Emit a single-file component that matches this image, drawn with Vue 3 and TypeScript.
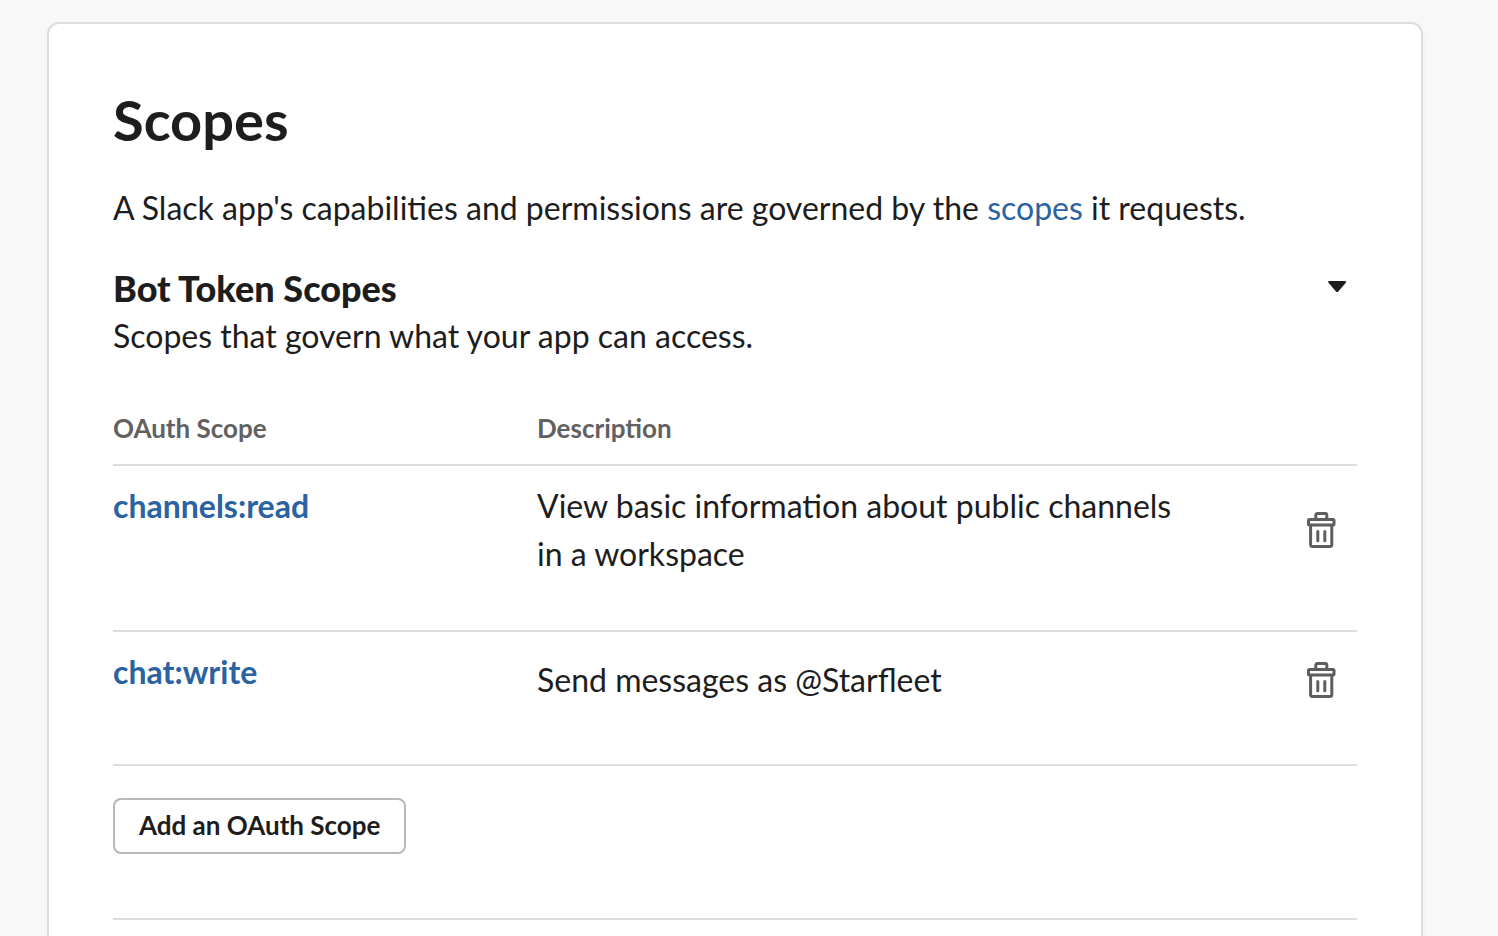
<script setup lang="ts">
interface Scope {
  name: string
  description: string
}

const scopes: Scope[] = [
  { name: 'channels:read', description: 'View basic information about public channels in a workspace' },
  { name: 'chat:write', description: 'Send messages as @Starfleet' },
]
</script>

<template>
  <main class="page">
    <section class="card">
      <h1>Scopes</h1>
      <p class="intro">
        A Slack app's capabilities and permissions are governed by the <a href="#scopes">scopes</a> it requests.
      </p>
      <header class="group">
        <div>
          <h2>Bot Token Scopes</h2>
          <p>Scopes that govern what your app can access.</p>
        </div>
        <button class="toggle" type="button" aria-label="Collapse Bot Token Scopes">
          <svg width="20" height="14" viewBox="0 0 20 14" aria-hidden="true">
            <path d="M2.2 1h15.9c1 0 1.300 1 .7 1.700l-7.500 8.700c-.7.8-1.600.8-2.300 0L1.500 2.700C.9 2 1.200 1 2.200 1z" fill="#1d1d1d" />
          </svg>
        </button>
      </header>
      <table>
        <thead>
          <tr>
            <th class="scope" scope="col">OAuth Scope</th>
            <th scope="col">Description</th>
            <th class="action"></th>
          </tr>
        </thead>
        <tbody>
          <tr v-for="scope in scopes" :key="scope.name">
            <td class="name"><a :href="'#' + scope.name">{{ scope.name }}</a></td>
            <td class="description">{{ scope.description }}</td>
            <td class="action">
              <button class="delete" type="button" :aria-label="'Delete ' + scope.name">
                <svg width="30" height="38" viewBox="0 0 30 38" fill="none" stroke="#5e5e5e" stroke-width="3" stroke-linecap="round" stroke-linejoin="round" aria-hidden="true">
                  <rect x="1.500" y="8.500" width="25.500" height="5.500" rx="1" />
                  <path d="M8.800 8V4c0-.8.700-1.500 1.500-1.500h8c.8 0 1.500.7 1.500 1.500v4M3.600 14.500v19c0 1.200.8 2 2 2h17.200c1.200 0 2-.8 2-2v-19M10.800 20.500v9.300M17.800 20.500v9.300" />
                </svg>
              </button>
            </td>
          </tr>
        </tbody>
      </table>
      <button class="add" type="button">Add an OAuth Scope</button>
      <hr />
    </section>
  </main>
</template>

<style>
body {
  margin: 0;
  background: #f8f8f8;
}
</style>

<style scoped>
.page {
  box-sizing: border-box;
  height: 100vh;
  overflow: hidden;
  padding: 22px 75px 0 47px;
  color: #1d1d1d;
  font: 32px/48px Lato, "Liberation Sans", sans-serif;
}
.card {
  box-sizing: border-box;
  min-height: 110vh;
  padding: 60px 64px;
  border: 2px solid #ddd;
  border-radius: 12px;
  background: #fff;
  box-shadow: 0 2px 6px rgba(0, 0, 0, 0.04);
}
h1, h2, p {
  margin: 0;
}
h1 {
  font-size: 56px;
  line-height: 72px;
  font-weight: 700;
}
.intro {
  margin-top: 28px;
}
a {
  color: #2b62a1;
  text-decoration: none;
}
.group {
  display: flex;
  justify-content: space-between;
  align-items: flex-start;
  margin-top: 32px;
}
h2 {
  font-family: "Lato Heavy", Lato, "Liberation Sans", sans-serif;
  font-size: 36px;
  line-height: 48px;
  font-weight: 800;
}
button {
  font-family: inherit;
  color: inherit;
  cursor: pointer;
}
.toggle, .delete {
  padding: 0;
  border: 0;
  background: none;
}
.toggle {
  margin: 16px 10px 0 0;
}
svg {
  display: block;
}
table {
  width: 100%;
  margin-top: 32px;
  border-collapse: separate;
  border-spacing: 0;
  table-layout: fixed;
}
th, td {
  border-bottom: 2px solid #ddd;
  text-align: left;
}
th {
  padding: 16px 0;
  color: #616161;
  font-size: 26px;
  line-height: 40px;
  font-weight: 700;
}
.scope {
  width: 424px;
}
th.action {
  width: 164px;
}
td {
  padding: 16px 0 52px;
}
.name {
  vertical-align: top;
  font-weight: 700;
}
.delete {
  display: flex;
  align-items: center;
  height: 64px;
  margin: 0 20px 0 auto;
}
.add {
  display: block;
  margin-top: 32px;
  padding: 6px 24px 8px;
  border: 2px solid #b8b8b8;
  border-radius: 8px;
  background: #fff;
  font-size: 26px;
  line-height: 38px;
  font-weight: 700;
}
hr {
  margin: 64px 0 0;
  border: 0;
  border-top: 2px solid #ddd;
}
</style>
